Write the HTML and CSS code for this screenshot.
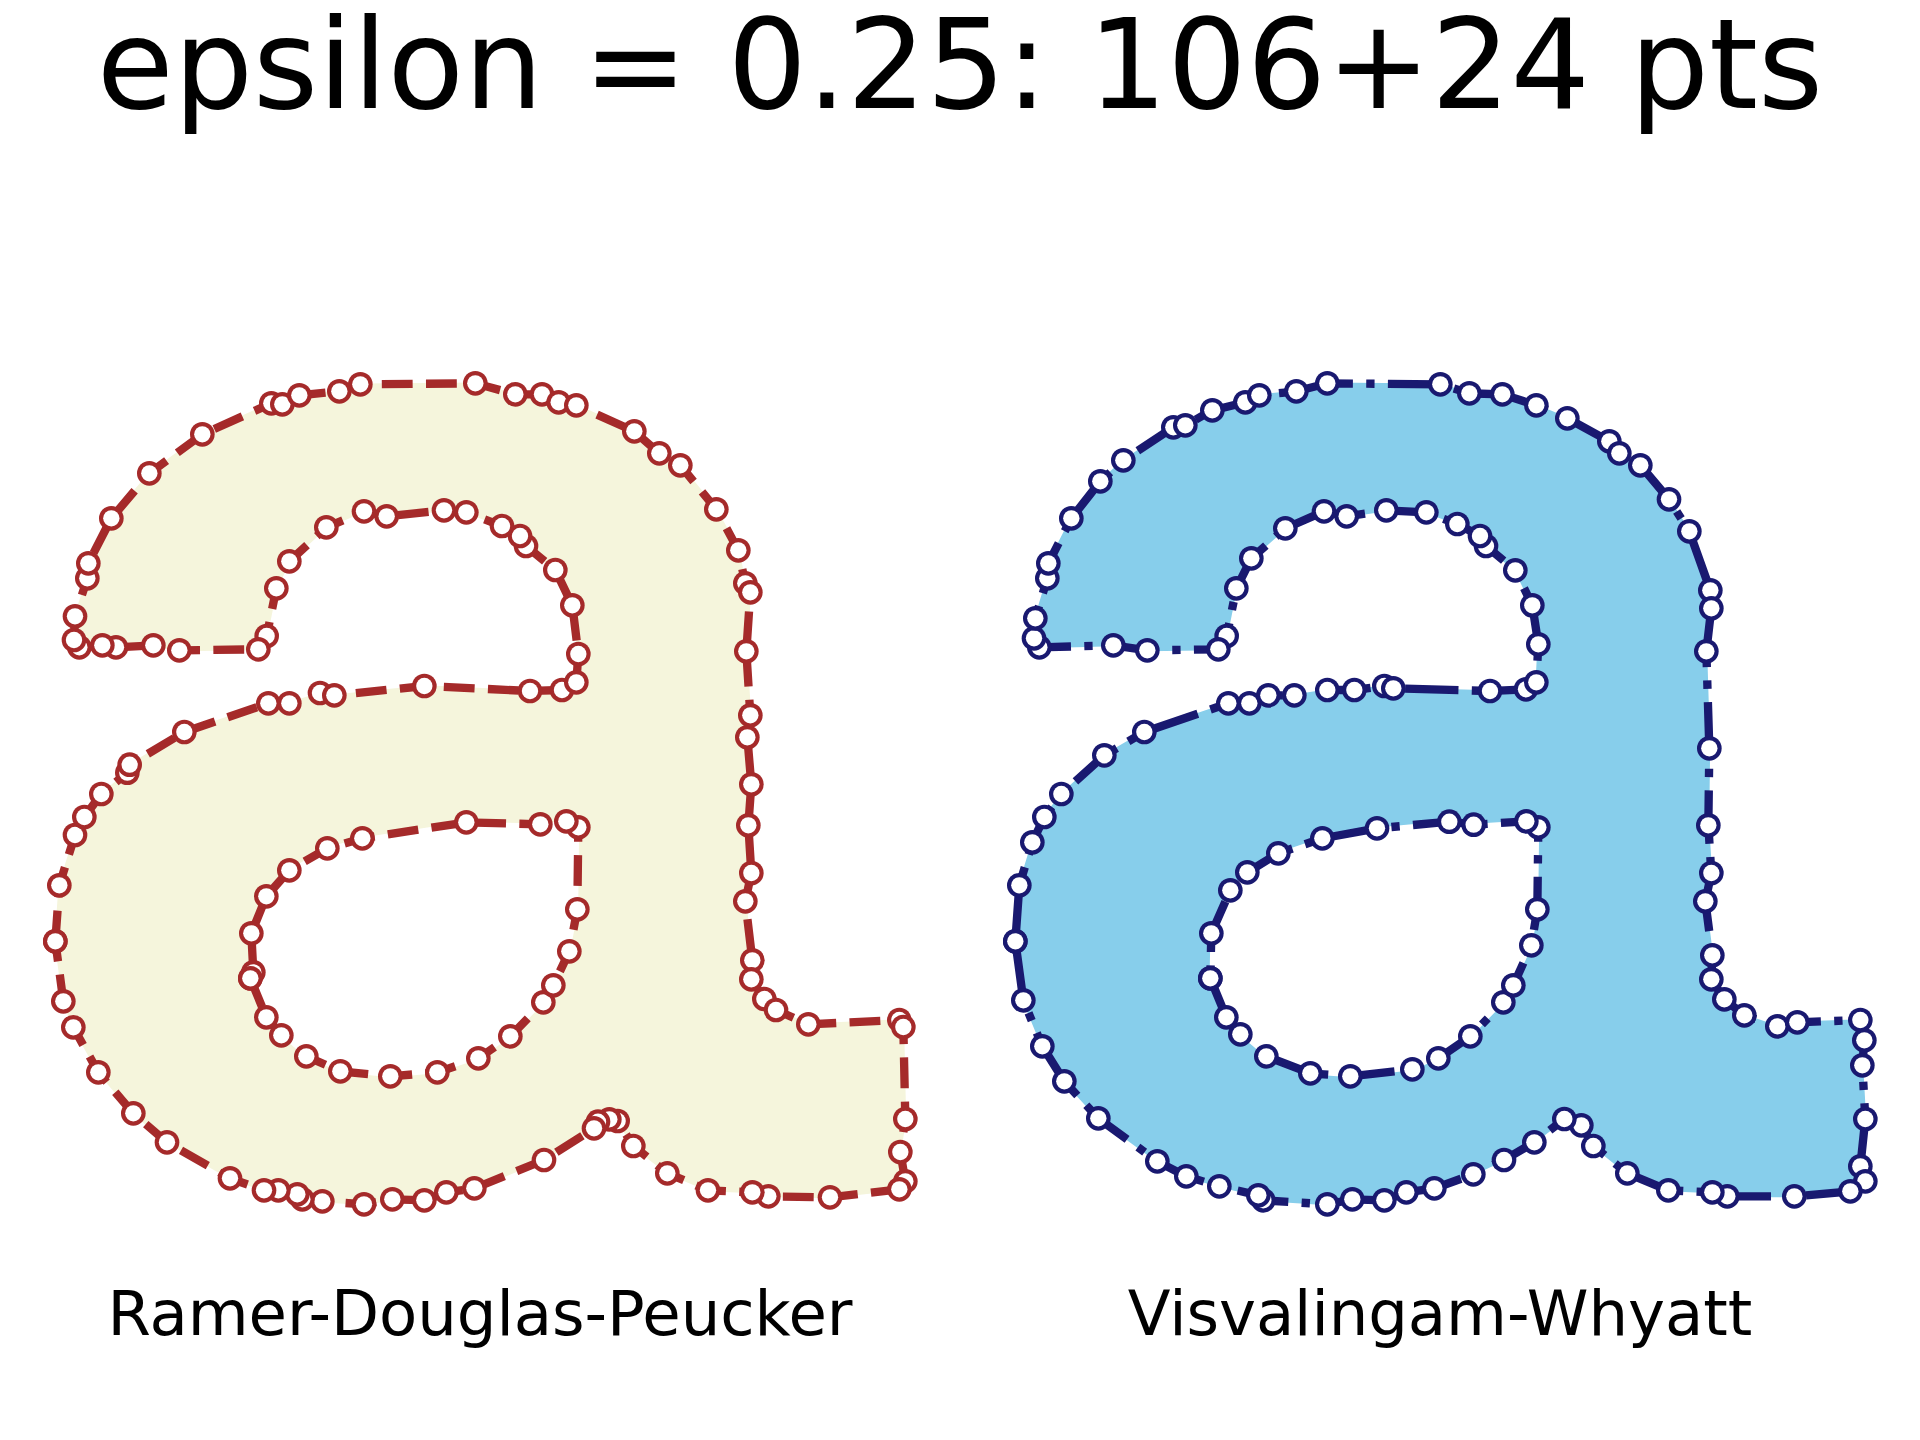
FILE: index.html
```html
<!DOCTYPE html>
<html lang="en">
<head>
<meta charset="utf-8">
<title>epsilon = 0.25: 106+24 pts</title>
<link rel="stylesheet" href="styles.css">
</head>
<body>
<main class="figure">
  <h1 class="title">epsilon = 0.25: 106+24 pts</h1>
  <div class="panels">
    <figure class="panel">
      <svg class="plot" viewBox="0 600 2880 3180" xmlns="http://www.w3.org/2000/svg">
        <defs>
          <marker id="dot-rdp" markerUnits="userSpaceOnUse" markerWidth="84" markerHeight="84" refX="42" refY="42" viewBox="0 0 84 84"><circle class="dot-rim-rdp" cx="42" cy="42" r="37"/><circle class="dot-core" cx="42" cy="42" r="24.5"/></marker>
        </defs>
        <polygon class="fill-beige" points="166,2824 178,2656 225,2505 253,2451 304,2382 382,2318 389,2294 553,2196 805,2110 868,2110 960,2079 1003,2086 1273,2058 1590,2073 1686,2070 1729,2047 1735,1962 1717,1816 1666,1710 1578,1638 1560,1608 1506,1578 1399,1537 1332,1531 1160,1549 1092,1534 979,1582 868,1684 829,1765 800,1908 775,1948 538,1951 460,1936 348,1942 307,1936 238,1942 222,1920 225,1849 262,1735 265,1690 334,1555 448,1420 607,1303 814,1210 847,1213 898,1186 1018,1174 1081,1153 1426,1150 1546,1183 1626,1183 1676,1207 1729,1216 1903,1294 1978,1360 2041,1396 2149,1528 2215,1651 2236,1750 2251,1777 2239,1954 2251,2146 2242,2212 2254,2353 2245,2476 2254,2619 2236,2704 2257,2881 2254,2938 2293,2997 2328,3030 2425,3073 2698,3060 2710,3081 2716,3357 2701,3456 2716,3544 2698,3568 2490,3592 2305,3589 2257,3577 2124,3571 2002,3520 1900,3438 1853,3363 1828,3358 1794,3365 1782,3385 1632,3480 1423,3565 1339,3577 1273,3601 1177,3598 1092,3613 967,3604 907,3598 892,3583 835,3571 792,3571 690,3535 501,3427 400,3340 295,3217 220,3082 190,3004"/>
        <polygon class="fill-hole" points="751,2935 799,3052 844,3106 919,3169 1021,3214 1171,3229 1312,3217 1435,3175 1531,3109 1630,3007 1660,2956 1708,2854 1732,2728 1735,2482 1699,2464 1621,2473 1399,2467 1087,2515 982,2545 868,2611 799,2689 754,2800 760,2917"/>
        <polygon class="line line-rdp" marker-start="url(#dot-rdp)" marker-mid="url(#dot-rdp)" marker-end="url(#dot-rdp)" points="166,2824 178,2656 225,2505 253,2451 304,2382 382,2318 389,2294 553,2196 805,2110 868,2110 960,2079 1003,2086 1273,2058 1590,2073 1686,2070 1729,2047 1735,1962 1717,1816 1666,1710 1578,1638 1560,1608 1506,1578 1399,1537 1332,1531 1160,1549 1092,1534 979,1582 868,1684 829,1765 800,1908 775,1948 538,1951 460,1936 348,1942 307,1936 238,1942 222,1920 225,1849 262,1735 265,1690 334,1555 448,1420 607,1303 814,1210 847,1213 898,1186 1018,1174 1081,1153 1426,1150 1546,1183 1626,1183 1676,1207 1729,1216 1903,1294 1978,1360 2041,1396 2149,1528 2215,1651 2236,1750 2251,1777 2239,1954 2251,2146 2242,2212 2254,2353 2245,2476 2254,2619 2236,2704 2257,2881 2254,2938 2293,2997 2328,3030 2425,3073 2698,3060 2710,3081 2716,3357 2701,3456 2716,3544 2698,3568 2490,3592 2305,3589 2257,3577 2124,3571 2002,3520 1900,3438 1853,3363 1828,3358 1794,3365 1782,3385 1632,3480 1423,3565 1339,3577 1273,3601 1177,3598 1092,3613 967,3604 907,3598 892,3583 835,3571 792,3571 690,3535 501,3427 400,3340 295,3217 220,3082 190,3004"/>
        <polygon class="line line-rdp" marker-start="url(#dot-rdp)" marker-mid="url(#dot-rdp)" marker-end="url(#dot-rdp)" points="751,2935 799,3052 844,3106 919,3169 1021,3214 1171,3229 1312,3217 1435,3175 1531,3109 1630,3007 1660,2956 1708,2854 1732,2728 1735,2482 1699,2464 1621,2473 1399,2467 1087,2515 982,2545 868,2611 799,2689 754,2800 760,2917"/>
      </svg>
      <figcaption class="caption">Ramer-Douglas-Peucker</figcaption>
    </figure>
    <figure class="panel">
      <svg class="plot" viewBox="0 600 2880 3180" xmlns="http://www.w3.org/2000/svg">
        <defs>
          <marker id="dot-vw" markerUnits="userSpaceOnUse" markerWidth="84" markerHeight="84" refX="42" refY="42" viewBox="0 0 84 84"><circle class="dot-rim-vw" cx="42" cy="42" r="37"/><circle class="dot-core" cx="42" cy="42" r="24.5"/></marker>
        </defs>
        <polygon class="fill-sky" points="166,2824 178,2656 217,2527 253,2451 304,2382 433,2266 553,2196 805,2110 868,2110 925,2086 1003,2086 1102,2070 1183,2070 1273,2058 1300,2065 1590,2073 1698,2068 1729,2047 1735,1933 1717,1816 1666,1711 1578,1638 1560,1608 1492,1572 1399,1537 1279,1531 1160,1549 1092,1534 976,1585 874,1675 829,1765 800,1908 775,1948 562,1951 460,1936 238,1942 222,1915 226,1855 262,1735 265,1690 334,1555 421,1444 490,1381 640,1282 676,1276 757,1231 856,1207 898,1186 1009,1174 1102,1150 1441,1153 1528,1180 1627,1183 1729,1216 1822,1255 1948,1324 1978,1360 2041,1396 2127,1498 2188,1594 2251,1771 2254,1825 2239,1954 2248,2245 2245,2476 2254,2619 2236,2704 2257,2866 2254,2938 2293,2998 2353,3046 2452,3079 2512,3067 2701,3060 2713,3121 2707,3196 2716,3357 2701,3499 2716,3544 2671,3574 2503,3589 2302,3589 2257,3577 2125,3571 2002,3520 1900,3438 1864,3376 1813,3357 1723,3427 1632,3480 1540,3523 1423,3565 1339,3577 1273,3601 1177,3598 1102,3613 910,3601 895,3586 778,3559 679,3529 592,3484 415,3355 313,3244 247,3139 190,3001"/>
        <polygon class="fill-hole" points="751,2935 799,3052 841,3103 919,3169 1051,3220 1171,3229 1357,3208 1435,3175 1531,3109 1630,3007 1660,2956 1714,2836 1732,2728 1735,2482 1699,2464 1541,2474 1468,2465 1251,2485 1087,2515 955,2560 862,2617 811,2671 754,2800"/>
        <polygon class="line line-vw" marker-start="url(#dot-vw)" marker-mid="url(#dot-vw)" marker-end="url(#dot-vw)" points="166,2824 178,2656 217,2527 253,2451 304,2382 433,2266 553,2196 805,2110 868,2110 925,2086 1003,2086 1102,2070 1183,2070 1273,2058 1300,2065 1590,2073 1698,2068 1729,2047 1735,1933 1717,1816 1666,1711 1578,1638 1560,1608 1492,1572 1399,1537 1279,1531 1160,1549 1092,1534 976,1585 874,1675 829,1765 800,1908 775,1948 562,1951 460,1936 238,1942 222,1915 226,1855 262,1735 265,1690 334,1555 421,1444 490,1381 640,1282 676,1276 757,1231 856,1207 898,1186 1009,1174 1102,1150 1441,1153 1528,1180 1627,1183 1729,1216 1822,1255 1948,1324 1978,1360 2041,1396 2127,1498 2188,1594 2251,1771 2254,1825 2239,1954 2248,2245 2245,2476 2254,2619 2236,2704 2257,2866 2254,2938 2293,2998 2353,3046 2452,3079 2512,3067 2701,3060 2713,3121 2707,3196 2716,3357 2701,3499 2716,3544 2671,3574 2503,3589 2302,3589 2257,3577 2125,3571 2002,3520 1900,3438 1864,3376 1813,3357 1723,3427 1632,3480 1540,3523 1423,3565 1339,3577 1273,3601 1177,3598 1102,3613 910,3601 895,3586 778,3559 679,3529 592,3484 415,3355 313,3244 247,3139 190,3001"/>
        <polygon class="line line-vw" marker-start="url(#dot-vw)" marker-mid="url(#dot-vw)" marker-end="url(#dot-vw)" points="751,2935 799,3052 841,3103 919,3169 1051,3220 1171,3229 1357,3208 1435,3175 1531,3109 1630,3007 1660,2956 1714,2836 1732,2728 1735,2482 1699,2464 1541,2474 1468,2465 1251,2485 1087,2515 955,2560 862,2617 811,2671 754,2800"/>
      </svg>
      <figcaption class="caption">Visvalingam-Whyatt</figcaption>
    </figure>
  </div>
</main>
</body>
</html>
```
FILE: styles.css
```css
html, body {
  margin: 0;
  background: #fff;
}
.figure {
  width: 1920px;
  height: 1440px;
  font-family: "DejaVu Sans", sans-serif;
  color: #000;
}
.title {
  margin: 0;
  height: 200px;
  font-size: 125px;
  font-weight: 400;
  line-height: 129px;
  text-align: center;
}
.panels {
  display: grid;
  grid-template-columns: 960px 960px;
}
.panel {
  margin: 0;
}
.plot {
  display: block;
  width: 960px;
  height: 1060px;
}
.caption {
  font-size: 62.5px;
  line-height: 108px;
  letter-spacing: -0.07px;
  text-align: center;
}
.fill-beige {
  fill: #f5f5dc;
  stroke: #f5f5dc;
  stroke-width: 5;
  stroke-linejoin: round;
}
.fill-sky {
  fill: #87ceeb;
  stroke: #87ceeb;
  stroke-width: 5;
  stroke-linejoin: round;
}
.fill-hole {
  fill: #fff;
  stroke: #fff;
  stroke-width: 5;
  stroke-linejoin: round;
}
.line {
  fill: none;
  stroke-width: 25;
}
.line-rdp {
  stroke: #a52a2a;
  stroke-dasharray: 92.5 40;
}
.line-vw {
  stroke: #191970;
  stroke-dasharray: 160 40 25 40;
}
.dot-rim-rdp { fill: #a52a2a; }
.dot-rim-vw { fill: #191970; }
.dot-core { fill: #fff; }
```
